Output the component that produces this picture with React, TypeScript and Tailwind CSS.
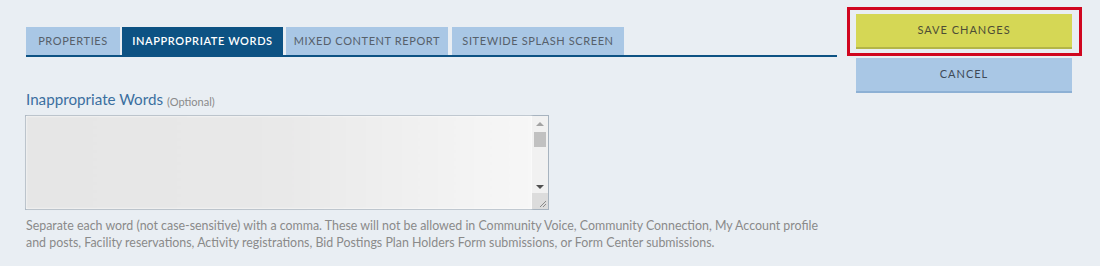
import React from 'react'

const tabs = [
  { label: 'Properties', w: 'w-[94px]', ml: '' },
  { label: 'Inappropriate Words', w: 'w-[161px]', ml: 'ml-[2px]', active: true },
  { label: 'Mixed Content Report', w: 'w-[162px]', ml: 'ml-[3px]' },
  { label: 'Sitewide Splash Screen', w: 'w-[172px]', ml: 'ml-[4px]' },
]

/** Fake textarea with blurred (redacted) contents and a classic scrollbar. */
function WordsBox() {
  return (
    <div className="relative ml-[-1px] mt-[8px] flex h-[95px] w-[524px] border border-[#a7b3bf] bg-white">
      <div className="flex-1 bg-gradient-to-r from-[#e6e6e6] via-[#e9e9e9] to-[#f7f7f7] blur-[1px]" />
      {/* Scrollbar */}
      <div className="relative flex w-[16px] flex-col items-center bg-[#f1f1f1]">
        <div className="mt-[6px] h-0 w-0 border-x-[4px] border-b-[4px] border-x-transparent border-b-[#a3a3a3]" />
        <div className="mt-[6px] h-[15px] w-[12px] bg-[#c1c1c1]" />
        <div className="mt-[38px] h-0 w-0 border-x-[4px] border-t-[4px] border-x-transparent border-t-[#505050]" />
        <div className="absolute bottom-0 left-0 h-[16px] w-[16px] bg-[#dcdcdc]">
          <svg viewBox="0 0 16 16" className="h-4 w-4">
            <path d="M14 8 L8 14 M14 11 L11 14" stroke="#8a8a8a" strokeWidth="1" />
          </svg>
        </div>
      </div>
    </div>
  )
}

export default function App() {
  return (
    <div className="flex h-[266px] w-[1100px] bg-[#e9eef3] font-['Lato','Open_Sans',sans-serif]">
      {/* Left column */}
      <div className="ml-[26px] w-[811px] pt-[27px]">
        <div className="flex border-b-2 border-[#0d5283]">
          {tabs.map((t) => (
            <div
              key={t.label}
              className={`${t.w} ${t.ml} flex h-[28px] items-center justify-center text-[11px] uppercase tracking-[0.6px] ${
                t.active ? 'bg-[#0d5283] font-semibold text-white' : 'bg-[#a9c7e5] text-[#56606b]'
              }`}
            >
              {t.label}
            </div>
          ))}
        </div>

        <div className="mt-[32px] flex h-[18px] items-end leading-none">
          <span className="text-[15.2px] text-[#3b6fa0]">Inappropriate Words</span>
          <span className="ml-[4px] text-[11px] text-[#8a8a8a]">(Optional)</span>
        </div>

        <WordsBox />

        <p className="mt-[7px] whitespace-nowrap text-[12.4px] leading-[17px] text-[#8a8a8a]">
          Separate each word (not case-sensitive) with a comma. These will not be allowed in Community Voice, Community
          Connection, My Account profile
          <br />
          and posts, Facility reservations, Activity registrations, Bid Postings Plan Holders Form submissions, or Form
          Center submissions.
        </p>
      </div>

      {/* Right column */}
      <div className="ml-[10px] pt-[7px]">
        <div className="w-[235px] border-[3px] border-[#d0061f] pb-[4px] pl-[6px] pr-[7px] pt-[4px]">
          <button className="flex h-[35px] w-[216px] items-center justify-center border-b-2 border-[#b3b548] bg-[#d5d755] text-[11px] uppercase tracking-[1px] text-[#4d4d36]">
            Save Changes
          </button>
        </div>
        <button className="ml-[9px] mt-[2px] flex h-[35px] w-[216px] items-center justify-center border-b-2 border-[#8db0d4] bg-[#a9c7e5] text-[11px] uppercase tracking-[1px] text-[#3f4a58]">
          Cancel
        </button>
      </div>
    </div>
  )
}
